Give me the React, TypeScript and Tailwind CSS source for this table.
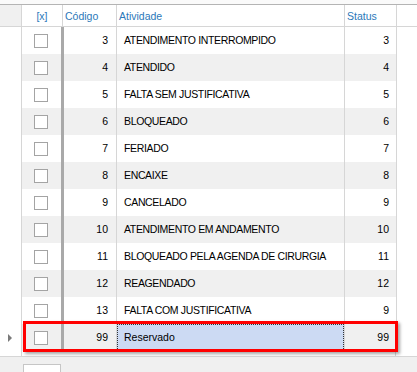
import React from "react";

const rows: [number, string, number][] = [
  [3, "ATENDIMENTO INTERROMPIDO", 3],
  [4, "ATENDIDO", 4],
  [5, "FALTA SEM JUSTIFICATIVA", 5],
  [6, "BLOQUEADO", 6],
  [7, "FERIADO", 7],
  [8, "ENCAIXE", 8],
  [9, "CANCELADO", 9],
  [10, "ATENDIMENTO EM ANDAMENTO", 10],
  [11, "BLOQUEADO PELA AGENDA DE CIRURGIA", 11],
  [12, "REAGENDADO", 12],
  [13, "FALTA COM JUSTIFICATIVA", 9],
];

function Check() {
  return <div className="w-[14px] h-[14px] border border-[#a4a4a4] bg-white" />;
}

export default function App() {
  return (
    <div
      className="w-[417px] h-[372px] bg-white relative overflow-hidden text-black flex flex-col"
      style={{ fontFamily: "'Liberation Sans', Arial, sans-serif", fontSize: "10.5px" }}
    >
      <div className="h-[5px] shrink-0 bg-[#fafafa] border-b border-[#b4b4b4]" />
      {/* header */}
      <div className="flex h-[22px] shrink-0 border-b border-[#d6d6d6] text-[#2b78b9]">
        <div className="w-[22px] shrink-0 bg-[#f0f0f0] border-r border-[#d6d6d6]" />
        <div className="w-[41px] shrink-0 border-r border-[#d6d6d6] flex items-center justify-center pt-[3px]">[x]</div>
        <div className="w-[54px] shrink-0 border-r border-[#d6d6d6] flex items-center pl-[2px] pt-[3px]">Código</div>
        <div className="w-[228px] shrink-0 border-r border-[#d6d6d6] flex items-center pl-[2px] pt-[3px]">Atividade</div>
        <div className="w-[52px] shrink-0 border-r border-[#d6d6d6] flex items-center pl-[2px] pt-[3px]">Status</div>
        <div className="flex-1" />
      </div>
      {rows.map(([c, a, s], i) => (
        <Row key={c} c={c} a={a} s={s} gray={i % 2 === 1} />
      ))}
      <Row c={99} a="Reservado" s={99} gray selected />
      <div className="h-[5px] shrink-0 flex">
        <div className="w-[22px] shrink-0 border-r border-[#d6d6d6]" />
        <div className="w-[374px] shrink-0 border-r border-[#d6d6d6]" />
      </div>
      <div className="flex-1 bg-[#f0f0f0] border-t border-[#d6d6d6] pt-[7px] pl-[23px]">
        <div className="w-[38px] h-[12px] bg-white border border-[#c6c6c6]" />
      </div>
      {/* red selection highlight */}
      <div className="absolute left-[23px] top-[321px] w-[375px] h-[31px] border-[3px] border-[#ff0000] shadow-[2px_2px_3px_rgba(0,0,0,0.35)]" />
    </div>
  );
}

function Row({
  c,
  a,
  s,
  gray,
  selected,
}: {
  c: number;
  a: string;
  s: number;
  gray?: boolean;
  selected?: boolean;
}) {
  const bg = gray ? "bg-[#f0f0f0]" : "bg-white";
  return (
    <div className="flex h-[27px] shrink-0">
      <div className="w-[22px] shrink-0 bg-white border-r border-[#d6d6d6] flex items-center justify-center">
        {selected && (
          <svg width="5" height="8" viewBox="0 0 5 8">
            <path d="M0 0 L4 4 L0 8 Z" fill="#7a7a7a" />
          </svg>
        )}
      </div>
      <div className={`w-[42px] shrink-0 ${bg} border-r-[3px] border-[#a9a9a9] flex items-center justify-center pr-[1px]`}>
        <Check />
      </div>
      <div className={`w-[53px] shrink-0 ${bg} border-r border-[#d6d6d6] flex items-center justify-end pr-[8px]`}>{c}</div>
      <div
        className={`w-[228px] shrink-0 border-r border-[#d6d6d6] flex items-center ${
          selected ? "bg-[#ccdaf3]" : bg
        }`}
      >
        <div
          className={`w-full h-full flex items-center whitespace-nowrap ${
            selected ? "border border-dotted border-[#333] pl-[6px]" : "pl-[7px]"
          } ${a === a.toUpperCase() ? "tracking-[-0.35px]" : ""}`}
        >
          {a}
        </div>
      </div>
      <div className={`w-[52px] shrink-0 ${bg} border-r border-[#d6d6d6] flex items-center justify-end pr-[7px]`}>{s}</div>
      <div className="flex-1 bg-white" />
    </div>
  );
}
